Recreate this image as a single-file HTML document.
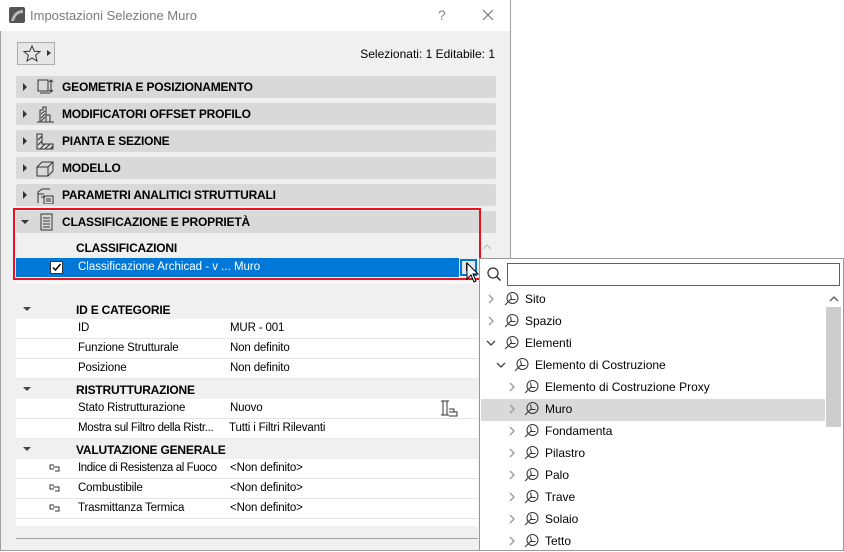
<!DOCTYPE html>
<html><head><meta charset="utf-8"><style>
*{box-sizing:border-box;margin:0;padding:0}
body{width:844px;height:551px;background:#fff;position:relative;overflow:hidden;font-family:"Liberation Sans",sans-serif;font-size:12px;color:#000}
.a{position:absolute}
.dlg{left:0;top:0;width:511px;height:551px;background:#f0f0f0;border:1px solid #a0a0a0;border-top:none}
.title{left:0;top:0;width:510px;height:31px;background:#fff}
.bar{left:16px;width:480px;height:22px;background:#d9d9d9;border-radius:2px}
.bar b{position:absolute;left:46px;top:4px;font-size:12px;letter-spacing:-0.2px}
.tri{position:absolute;left:7px;top:7px;width:0;height:0;border-left:4px solid #333;border-top:4px solid transparent;border-bottom:4px solid transparent}
.row{left:16px;width:462px;height:20px;background:#fff;border-bottom:1px solid #e6e6e6;font-size:11.5px;letter-spacing:-0.15px}
.hdr{left:16px;width:462px;height:20px;background:#f0f0f0}
.hdr b{position:absolute;left:60px;top:4px;letter-spacing:-0.2px}
.hdr i{position:absolute;left:7px;top:8px;border-top:4px solid #444;border-left:4px solid transparent;border-right:4px solid transparent}
.row span{position:absolute;top:3px;white-space:nowrap}
.pop{left:479px;top:258px;width:365px;height:293px;background:#fff;border:1px solid #999}
.it{position:absolute;height:22px;font-size:12px}
.it span{position:absolute;top:4px;white-space:nowrap}
</style></head><body>
<div class="a dlg"></div>
<div class="a title"></div>
<svg class="a" style="left:9px;top:7px" width="16" height="16"><rect x="0" y="0" width="16" height="16" rx="2" fill="#555"/><path d="M2 14 Q5 3 14 3 L14 6 Q7 6 5 14Z" fill="#bbb"/></svg>
<div class="a" style="left:30px;top:8px;font-size:13px;color:#7a7a7a">Impostazioni Selezione Muro</div>
<div class="a" style="left:438px;top:7px;font-size:14px;color:#888">?</div>
<svg class="a" style="left:482px;top:9px" width="12" height="12"><path d="M1 1L11 11M11 1L1 11" stroke="#777" stroke-width="1.2"/></svg>
<div class="a" style="left:17px;top:42px;width:38px;height:23px;border:1px solid #adadad;background:#e6e6e6"></div>
<svg class="a" style="left:22px;top:44px" width="20" height="19"><path d="M10 2 L12.3 7.3 L18 7.6 L13.6 11.3 L15 17 L10 14 L5 17 L6.4 11.3 L2 7.6 L7.7 7.3Z" fill="none" stroke="#333"/></svg>
<div class="a" style="left:47px;top:50px;border-left:4px solid #333;border-top:3.5px solid transparent;border-bottom:3.5px solid transparent"></div>
<div class="a" style="right:349px;top:47px;font-size:12px">Selezionati: 1 Editabile: 1</div>

<div class="a bar" style="top:76px"><i class="tri"></i><svg class="a" style="left:20px;top:2px" width="18" height="18"><rect x="2" y="2" width="10" height="11" fill="none" stroke="#333"/><path d="M4 15h10M15 3v10M13 4l2-2 2 2M13 12l2 2 2-2" stroke="#333" fill="none"/></svg><b>GEOMETRIA E POSIZIONAMENTO</b></div>
<div class="a bar" style="top:103px"><i class="tri"></i><svg class="a" style="left:20px;top:2px" width="18" height="18"><path d="M4 17V5h3V2h3v15M1 17h17M10 10h4v7" stroke="#333" fill="none"/><path d="M5 9l4-3M5 13l4-4M5 16l4-4" stroke="#333"/></svg><b>MODIFICATORI OFFSET PROFILO</b></div>
<div class="a bar" style="top:130px"><i class="tri"></i><svg class="a" style="left:20px;top:2px" width="18" height="18"><path d="M1 17V2h5v10h11v5z" stroke="#333" fill="none"/><path d="M2 8l4-4M2 13l4-4M4 17l5-5M9 17l5-5M14 17l3-3" stroke="#333"/></svg><b>PIANTA E SEZIONE</b></div>
<div class="a bar" style="top:157px"><i class="tri"></i><svg class="a" style="left:20px;top:2px" width="18" height="18"><path d="M1 8l5-5h11v9l-5 5H1zM1 8h11v9M12 8l5-5" stroke="#333" fill="none"/></svg><b>MODELLO</b></div>
<div class="a bar" style="top:184px"><i class="tri"></i><svg class="a" style="left:20px;top:2px" width="18" height="18"><path d="M2 17V6l4-3h8M2 8h6M5 11h4M8 10h9v8H8z M10 13h5M10 15h5" stroke="#333" fill="none"/></svg><b>PARAMETRI ANALITICI STRUTTURALI</b></div>
<div class="a bar" style="top:211px"><i class="a" style="left:5px;top:9px;border-top:4px solid #333;border-left:4px solid transparent;border-right:4px solid transparent"></i><svg class="a" style="left:24px;top:2px" width="14" height="18"><path d="M1 1h11v16H1z M3 5h7M3 8h7M3 11h7M3 14h7" stroke="#333" fill="none"/></svg><b>CLASSIFICAZIONE E PROPRIETÀ</b></div>

<div class="a" style="left:76px;top:241px;font-weight:bold;letter-spacing:-0.2px">CLASSIFICAZIONI</div>
<svg class="a" style="left:482px;top:243px" width="10" height="7"><path d="M1 6l4-4 4 4" stroke="#bbb" fill="none"/></svg>
<div class="a" style="left:16px;top:258px;width:443px;height:19px;background:#0078d7"></div>
<div class="a" style="left:50px;top:261px;width:13px;height:13px;background:#fff;border:1px solid #333"></div>
<svg class="a" style="left:51px;top:262px" width="11" height="11"><path d="M2 5.5l2.5 2.5 5-6" stroke="#000" stroke-width="1.5" fill="none"/></svg>
<div class="a" style="left:78px;top:261px;color:#fff;font-size:11.5px">Classificazione Archicad - v ... Muro</div>
<div class="a" style="left:460px;top:259px;width:17px;height:17px;border:2px solid #0078d7;background:#e5e5e5"></div>
<div class="a" style="left:466px;top:263px;border-left:5px solid #222;border-top:4px solid transparent;border-bottom:4px solid transparent"></div>
<div class="a" style="left:13px;top:208px;width:468px;height:72px;border:2px solid #e8131c"></div>
<div class="a" style="left:16px;top:281px;width:462px;height:3px;background:#f8f8f8"></div>

<div class="a hdr" style="top:299px"><i></i><b>ID E CATEGORIE</b></div>
<div class="a row" style="top:319px"><span style="left:62px">ID</span><span style="left:214px">MUR - 001</span></div>
<div class="a row" style="top:339px"><span style="left:62px">Funzione Strutturale</span><span style="left:214px">Non definito</span></div>
<div class="a row" style="top:359px"><span style="left:62px">Posizione</span><span style="left:214px">Non definito</span></div>
<div class="a hdr" style="top:379px"><i></i><b>RISTRUTTURAZIONE</b></div>
<div class="a row" style="top:399px"><span style="left:62px">Stato Ristrutturazione</span><span style="left:214px">Nuovo</span><svg class="a" style="left:424px;top:0" width="18" height="19"><path d="M1 2h8M3 2v14M7 2v14M1 16h8M9 10h5v3M9 13h8v4H9" stroke="#333" fill="none"/></svg></div>
<div class="a row" style="top:419px"><span style="left:62px;letter-spacing:-0.3px">Mostra sul Filtro della Ristr...</span><span style="left:213px">Tutti i Filtri Rilevanti</span></div>
<div class="a hdr" style="top:439px"><i></i><b>VALUTAZIONE GENERALE</b></div>
<div class="a row" style="top:459px"><svg class="a" style="left:33px;top:5px" width="12" height="8"><path d="M5 1H1v4h4M4 3h6v4H6" stroke="#333" fill="none"/></svg><span style="left:62px;letter-spacing:-0.4px">Indice di Resistenza al Fuoco</span><span style="left:214px">&lt;Non definito&gt;</span></div>
<div class="a row" style="top:479px"><svg class="a" style="left:33px;top:5px" width="12" height="8"><path d="M5 1H1v4h4M4 3h6v4H6" stroke="#333" fill="none"/></svg><span style="left:62px">Combustibile</span><span style="left:214px">&lt;Non definito&gt;</span></div>
<div class="a row" style="top:499px"><svg class="a" style="left:33px;top:5px" width="12" height="8"><path d="M5 1H1v4h4M4 3h6v4H6" stroke="#333" fill="none"/></svg><span style="left:62px">Trasmittanza Termica</span><span style="left:214px">&lt;Non definito&gt;</span></div>
<div class="a row" style="top:519px;height:7px;overflow:hidden;border:none"></div>
<div class="a" style="left:16px;top:538px;width:462px;height:1px;background:#a0a0a0"></div>

<div class="a pop">
<svg class="a" style="left:6px;top:7px" width="16" height="16"><circle cx="7" cy="7" r="5" stroke="#333" fill="none" stroke-width="1.3"/><path d="M10.5 10.5l4 4" stroke="#333" stroke-width="1.5"/></svg>
<div class="a" style="left:27px;top:4px;width:333px;height:23px;border:1px solid #0078d7"></div>
<div class="a" style="left:346px;top:48px;width:15px;height:120px;background:#cdcdcd"></div>
<svg class="a" style="left:349px;top:36px" width="10" height="7"><path d="M1 6l4-4 4 4" stroke="#555" fill="none" stroke-width="1.3"/></svg>
<div class="a" style="left:1px;top:140px;width:344px;height:22px;background:#d9d9d9"></div>
</div>
<svg width="0" height="0" style="position:absolute"><defs>
<g id="ic"><circle cx="8.5" cy="7" r="5.5" stroke="#333" fill="none"/><path d="M1 14L7 8M6.5 3.5l1 5h4" stroke="#333" fill="none"/></g>
<g id="ch"><path d="M1 1l4 4-4 4" stroke="#999" fill="none" stroke-width="1.3"/></g>
<g id="cd"><path d="M1 1l4 4 4-4" stroke="#444" fill="none" stroke-width="1.3"/></g>
</defs></svg>
<div class="a" style="left:0;top:0">
<div class="it" style="left:484px;top:288px"><svg class="a" style="left:4px;top:6px" width="8" height="11"><use href="#ch"/></svg><svg class="a" style="left:20px;top:3px" width="16" height="16"><use href="#ic"/></svg><span style="left:41px">Sito</span></div>
<div class="it" style="left:484px;top:310px"><svg class="a" style="left:4px;top:6px" width="8" height="11"><use href="#ch"/></svg><svg class="a" style="left:20px;top:3px" width="16" height="16"><use href="#ic"/></svg><span style="left:41px">Spazio</span></div>
<div class="it" style="left:484px;top:332px"><svg class="a" style="left:2px;top:8px" width="10" height="7"><use href="#cd"/></svg><svg class="a" style="left:20px;top:3px" width="16" height="16"><use href="#ic"/></svg><span style="left:41px">Elementi</span></div>
<div class="it" style="left:494px;top:354px"><svg class="a" style="left:2px;top:8px" width="10" height="7"><use href="#cd"/></svg><svg class="a" style="left:20px;top:3px" width="16" height="16"><use href="#ic"/></svg><span style="left:41px">Elemento di Costruzione</span></div>
<div class="it" style="left:504px;top:376px"><svg class="a" style="left:5px;top:6px" width="8" height="11"><use href="#ch"/></svg><svg class="a" style="left:20px;top:3px" width="16" height="16"><use href="#ic"/></svg><span style="left:41px">Elemento di Costruzione Proxy</span></div>
<div class="it" style="left:504px;top:398px"><svg class="a" style="left:5px;top:6px" width="8" height="11"><use href="#ch"/></svg><svg class="a" style="left:20px;top:3px" width="16" height="16"><use href="#ic"/></svg><span style="left:41px">Muro</span></div>
<div class="it" style="left:504px;top:420px"><svg class="a" style="left:5px;top:6px" width="8" height="11"><use href="#ch"/></svg><svg class="a" style="left:20px;top:3px" width="16" height="16"><use href="#ic"/></svg><span style="left:41px">Fondamenta</span></div>
<div class="it" style="left:504px;top:442px"><svg class="a" style="left:5px;top:6px" width="8" height="11"><use href="#ch"/></svg><svg class="a" style="left:20px;top:3px" width="16" height="16"><use href="#ic"/></svg><span style="left:41px">Pilastro</span></div>
<div class="it" style="left:504px;top:464px"><svg class="a" style="left:5px;top:6px" width="8" height="11"><use href="#ch"/></svg><svg class="a" style="left:20px;top:3px" width="16" height="16"><use href="#ic"/></svg><span style="left:41px">Palo</span></div>
<div class="it" style="left:504px;top:486px"><svg class="a" style="left:5px;top:6px" width="8" height="11"><use href="#ch"/></svg><svg class="a" style="left:20px;top:3px" width="16" height="16"><use href="#ic"/></svg><span style="left:41px">Trave</span></div>
<div class="it" style="left:504px;top:508px"><svg class="a" style="left:5px;top:6px" width="8" height="11"><use href="#ch"/></svg><svg class="a" style="left:20px;top:3px" width="16" height="16"><use href="#ic"/></svg><span style="left:41px">Solaio</span></div>
<div class="it" style="left:504px;top:530px"><svg class="a" style="left:5px;top:6px" width="8" height="11"><use href="#ch"/></svg><svg class="a" style="left:20px;top:3px" width="16" height="16"><use href="#ic"/></svg><span style="left:41px">Tetto</span></div>
</div>
<svg class="a" style="left:466px;top:262px" width="14" height="22"><path d="M1 1v16l4-4 3 7 2-1-3-7h5z" fill="#fff" stroke="#000"/></svg>
</body></html>
